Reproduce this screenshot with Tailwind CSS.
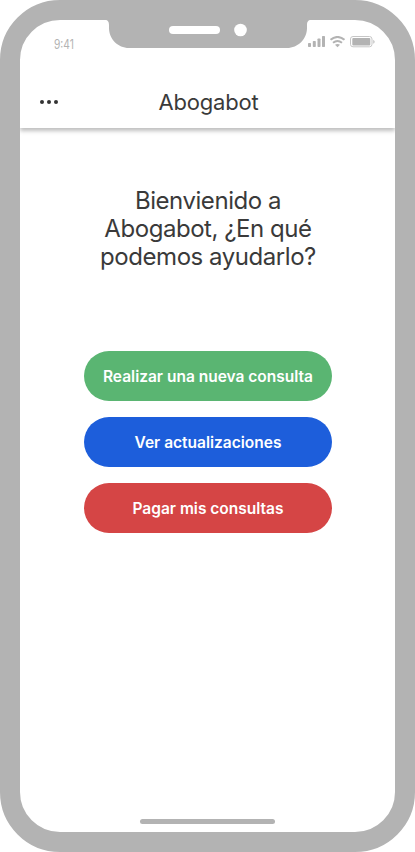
<!DOCTYPE html>
<html lang="es">
<head>
<meta charset="utf-8">
<title>Abogabot</title>
<script src="https://cdn.jsdelivr.net/npm/@tailwindcss/browser@4"></script>
</head>
<body class="bg-white">
<div class="relative flex h-[852px] w-[415px] flex-col overflow-hidden rounded-[60px] border-20 border-[#b3b3b3] bg-white font-['Inter',sans-serif] text-[#3a3a3a]">
  <svg class="absolute left-[85px] top-0" width="206" height="28" viewBox="0 0 206 28">
    <path d="M0 0C3 0 4 2 4 5V8C4 19 13 28 24 28H182C193 28 202 19 202 8V5C202 2 203 0 206 0Z" fill="#b3b3b3"/>
    <rect x="64" y="6" width="51" height="8" rx="4" fill="#fff"/>
    <circle cx="135.5" cy="10" r="6.3" fill="#fff"/>
  </svg>
  <header class="flex h-[108px] shrink-0 flex-col shadow-[0_3px_4px_rgba(0,0,0,0.25)]">
    <div class="flex h-[55px] justify-between pl-[34px] pr-[20px] pt-4">
      <span class="mt-px h-4 w-5 origin-left scale-x-[0.82] whitespace-nowrap text-[12.5px] font-normal leading-4 text-[#b3b3b3]">9:41</span>
      <svg width="67" height="12" viewBox="0 0 67 12" fill="#b3b3b3">
        <rect x="0" y="7" width="3" height="4" rx=".7"/>
        <rect x="4.8" y="5" width="3" height="6" rx=".7"/>
        <rect x="9.5" y="2.5" width="3" height="8.500" rx=".7"/>
        <rect x="14" y="0" width="3" height="11" rx=".7"/>
        <g fill="none" stroke="#b3b3b3" stroke-width="2"><path d="M22.500 3.800Q29.500-1.900 36.500 3.800"/><path d="M25 6.800Q29.500 3.200 34 6.800"/></g>
        <path d="M27 8.800Q29.500 7 32 8.800L29.500 11.200Z"/>
        <rect x="42.500" y=".5" width="21.500" height="10.300" rx="2.500" fill="none" stroke="#c6c6c6"/>
        <rect x="44.300" y="2" width="18" height="7.400" rx="1"/>
        <path d="M65.200 3.700Q66.700 4.500 66.700 5.700Q66.700 7 65.200 7.700Z" fill="#c6c6c6"/>
      </svg>
    </div>
    <div class="relative flex h-[53px] items-center justify-center">
      <svg class="absolute left-[20px] top-[24px]" width="18" height="6" fill="#333"><circle cx="2" cy="3" r="2"/><circle cx="9" cy="3" r="2"/><circle cx="16" cy="3" r="2"/></svg>
      <h1 class="ml-[2px] whitespace-nowrap text-[22px] font-normal leading-7 tracking-[-0.2px]">Abogabot</h1>
    </div>
  </header>
  <main class="flex flex-1 flex-col items-center">
    <h2 class="ml-px mt-[59px] flex flex-col items-center whitespace-nowrap text-[24px] font-normal leading-7 tracking-[-0.45px]">
      <span>Bienvienido a</span>
      <span>Abogabot, ¿En qué</span>
      <span>podemos ayudarlo?</span>
    </h2>
    <div class="ml-px mt-20 flex w-[248px] flex-col gap-4 whitespace-nowrap text-[15.5px] font-semibold text-white">
      <button class="h-[50px] rounded-full bg-[#5ab572] pt-0.5">Realizar una nueva consulta</button>
      <button class="h-[50px] rounded-full bg-[#1d5edb] pt-0.5">Ver actualizaciones</button>
      <button class="h-[50px] rounded-full bg-[#d54545] pt-0.5">Pagar mis consultas</button>
    </div>
  </main>
  <div class="mb-2 h-[5px] w-[135px] self-center rounded-full bg-[#b3b3b3]"></div>
</div>
</body>
</html>
